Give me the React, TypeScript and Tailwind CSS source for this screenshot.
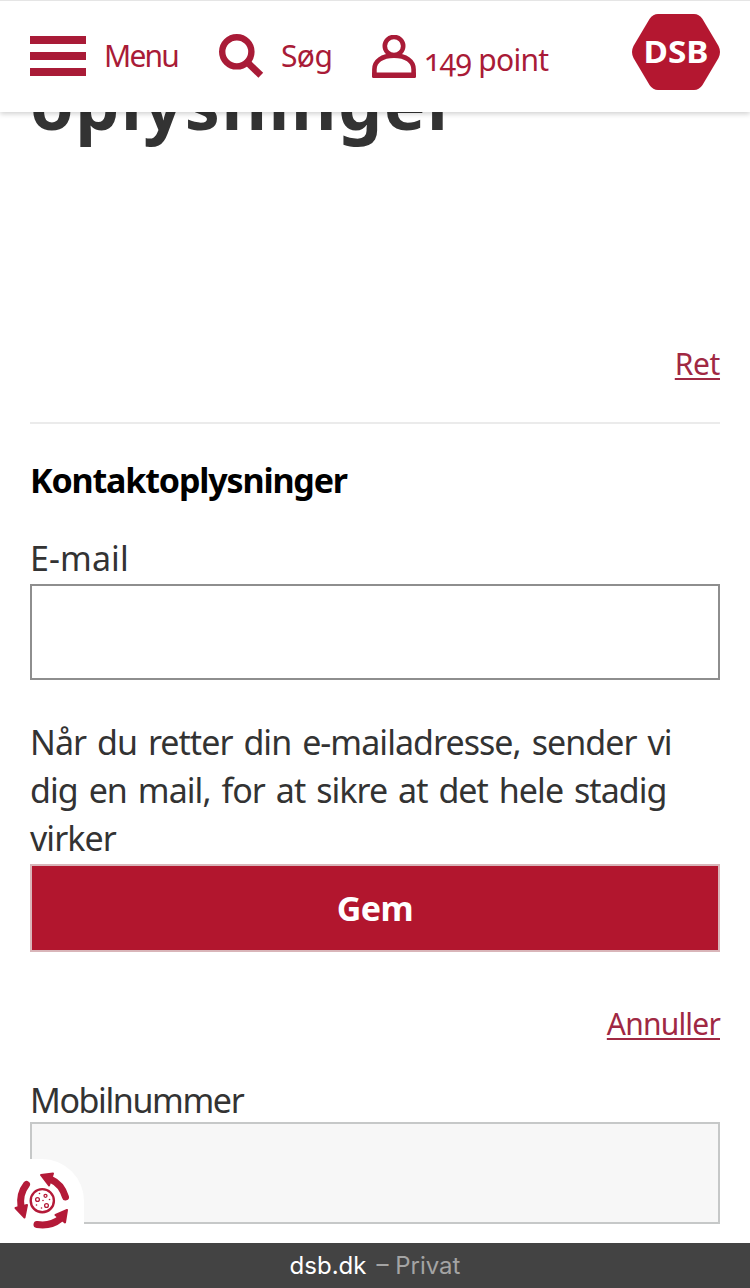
import React, { useState } from 'react';

function SearchIcon() {
  return (
    <svg width="46" height="46" viewBox="0 0 46 46" fill="none" stroke="#a91b37">
      <circle cx="18.8" cy="18.8" r="14.6" strokeWidth="6.4" />
      <path d="M28.5 28.5 L42.8 42.3" strokeWidth="6.8" />
    </svg>
  );
}

function UserIcon() {
  return (
    <svg width="44" height="44" viewBox="0 0 44 44" fill="none" stroke="#a91b37">
      <ellipse cx="22" cy="11" rx="9.2" ry="9" strokeWidth="4.6" />
      <path d="M2.4 39 V34.5 C2.4 26 10 20.6 22 20.6 C34 20.6 41.6 26 41.6 34.5 V39" strokeWidth="4.6" />
      <path d="M0 37.4 H44 V41.5 Q44 43 42.5 43 H1.5 Q0 43 0 41.5 Z" fill="#a91b37" stroke="none" />
    </svg>
  );
}

function Logo() {
  return (
    <svg width="88" height="76" viewBox="0 0 88 76">
      <path
        d="M26 0 H62 Q67 0 70.5 5 L86.5 32 Q89.5 38 86.5 44 L70.5 71 Q67 76 62 76 H26 Q21 76 17.5 71 L1.5 44 Q-1.5 38 1.5 32 L17.5 5 Q21 0 26 0 Z"
        fill="#b41730"
      />
      <text x="44" y="49" textAnchor="middle" textLength="65" lengthAdjust="spacingAndGlyphs" fill="#fff" fontFamily="Noto Sans, sans-serif" fontWeight="700" fontSize="31">
        DSB
      </text>
    </svg>
  );
}

function CookieIcon() {
  return (
    <svg width="56" height="58" viewBox="0 0 56 58" fill="none" stroke="#b41a38">
      <g strokeWidth="7" strokeLinecap="round">
        <path d="M51.5 25 Q47.5 12 37 7.5" />
        <path d="M12.5 12.5 Q5 22 7 35" />
        <path d="M23 52.5 Q37 54.5 46 47" />
      </g>
      <g fill="#b41a38" strokeWidth="2" strokeLinejoin="round">
        <path d="M27 3 L39 1.5 L35 13.5 Z" />
        <path d="M1.5 36 L13 33 L10.5 45.5 Z" />
        <path d="M53 38 L41.5 43 L51 50.5 Z" />
      </g>
      <circle cx="28.3" cy="28.7" r="11.6" strokeWidth="2.4" />
      <g strokeWidth="1.3">
        <circle cx="23.5" cy="27.5" r="1.9" />
        <circle cx="31.5" cy="23.8" r="1.5" />
        <circle cx="32.5" cy="33.5" r="1.9" />
      </g>
      <g fill="#b41a38" stroke="none">
        <circle cx="25.5" cy="21.5" r="0.8" />
        <circle cx="29" cy="28.5" r="0.8" />
        <circle cx="35.5" cy="27.5" r="0.8" />
        <circle cx="27.5" cy="36" r="0.8" />
        <circle cx="22.5" cy="33" r="0.8" />
      </g>
    </svg>
  );
}

export default function App() {
  const [email, setEmail] = useState('');

  return (
    <div className="relative flex flex-col w-[750px] h-[1288px] overflow-hidden bg-white text-[#333] font-['Noto_Sans',sans-serif]">
      <header className="relative z-10 flex shrink-0 items-start h-28 px-[30px] bg-white border-t border-[#e5e5e5] shadow-[0_2px_5px_rgba(0,0,0,0.18)] text-[#a91b37] text-[30px] leading-10">
        <button className="flex items-start">
          <span className="flex flex-col gap-2 w-14 mt-[35px]">
            <span className="h-2 bg-[#a91b37]" />
            <span className="h-2 bg-[#a91b37]" />
            <span className="h-2 bg-[#a91b37]" />
          </span>
          <span className="w-[95px] mt-[35px] ml-[18px] text-left tracking-[-1.8px]">Menu</span>
        </button>
        <button className="flex items-start w-[154px] ml-[19px]">
          <span className="mt-8"><SearchIcon /></span>
          <span className="mt-[35px] ml-[17px] tracking-[-0.6px]">Søg</span>
        </button>
        <button className="flex items-start">
          <span className="mt-[34px]"><UserIcon /></span>
          <span className="mt-[39px] ml-[8px] whitespace-nowrap oldstyle-nums tracking-[-0.7px]">149 point</span>
        </button>
        <a href="#" className="ml-auto mt-[13px]"><Logo /></a>
      </header>

      <main className="flex flex-col px-[30px]">
        <h1 className="-mt-[51px] h-[84px] text-[70px] leading-[84px] font-bold tracking-[1.5px]">oplysninger</h1>

        <section className="flex justify-end h-[279px] border-b-2 border-[#ebebeb] pt-[199px]">
          <a href="#" className="text-[#a02843] text-[30px] leading-10 h-10 underline decoration-2 underline-offset-3 tracking-[-0.4px]">Ret</a>
        </section>

        <h2 className="mt-8 text-[34px] leading-[48px] text-black font-bold whitespace-nowrap tracking-[-1.15px]">Kontaktoplysninger</h2>
        <label htmlFor="email" className="mt-[30px] text-[34px] leading-[48px] tracking-[0.1px]">E-mail</label>
        <input
          id="email"
          type="email"
          value={email}
          onChange={e => setEmail(e.target.value)}
          className="w-full h-24 mt-[2px] px-5 border-2 border-[#8e8e8e] bg-white outline-none"
        />
        <p className="mt-[38px] text-[34px] leading-[48px] whitespace-nowrap tracking-[-0.95px] [word-spacing:3px]">
          Når du retter din e-mailadresse, sender vi<br />
          dig en mail, for at sikre at det hele stadig<br />
          virker
        </p>
        <button className="h-[88px] mt-[2px] border-2 border-[#d9b5b9] bg-[#b2162e] text-white text-[34px] leading-[48px] font-bold tracking-[-0.5px]">
          Gem
        </button>
        <div className="flex justify-end mt-[52px]">
          <a href="#" className="text-[#a02843] text-[30px] leading-10 underline decoration-2 underline-offset-3 tracking-[-0.8px]">Annuller</a>
        </div>
        <label htmlFor="mobile" className="mt-[32px] text-[34px] leading-[48px] tracking-[-1.4px]">Mobilnummer</label>
        <input id="mobile" disabled className="w-full h-[102px] mt-[-2px] px-5 border-2 border-[#c6c8c8] bg-[#f7f7f7]" />
      </main>

      <button className="absolute left-0 bottom-[45px] w-[84px] h-[84px] pl-[14px] pt-0 bg-white rounded-tr-[42px]">
        <CookieIcon />
      </button>

      <footer className="flex items-center justify-center gap-2.5 h-[45px] mt-auto bg-[#434343] text-white text-[24px] leading-[45px] font-['Inter',sans-serif]">
        <span>dsb.dk</span>
        <span className="text-[#a4a4a4]">– Privat</span>
      </footer>
    </div>
  );
}
